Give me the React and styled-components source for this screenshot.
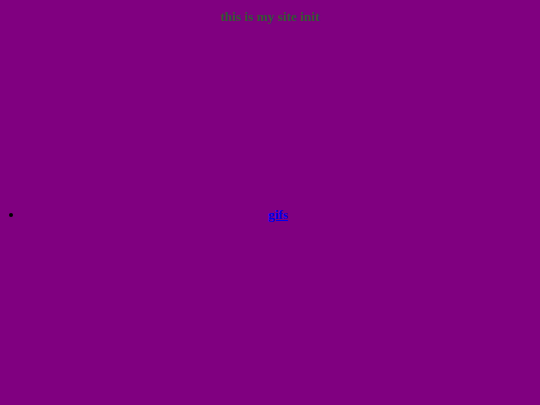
import styled, { createGlobalStyle } from "styled-components";

const GlobalStyle = createGlobalStyle`
  html, body {
    background: #800080;
  }
  body {
    margin: 8px;
    font-family: "Liberation Serif", "Times New Roman", serif;
    font-size: 13.33px;
  }
`;

const StyledTitle = styled.h1`
  margin: 0;
  font-size: 13.33px;
  line-height: 18px;
  font-weight: bold;
  text-align: center;
  color: #355535;
`;

const StyledList = styled.ul`
  margin: 180px 0 0;
  padding-left: 16px;
`;

const StyledItem = styled.li`
  text-align: center;
  line-height: 18px;
`;

const StyledLink = styled.a`
  font-weight: bold;
  color: #0000ee;
  text-decoration: underline;
`;

const links = [{ id: 1, label: "gifs", href: "#gifs" }];

function App() {
  return (
    <>
      <GlobalStyle />
      <StyledTitle>this is my site init</StyledTitle>
      <StyledList>
        {links.map((item) => (
          <StyledItem key={item.id}>
            <StyledLink href={item.href}>{item.label}</StyledLink>
          </StyledItem>
        ))}
      </StyledList>
    </>
  );
}

export default App;
